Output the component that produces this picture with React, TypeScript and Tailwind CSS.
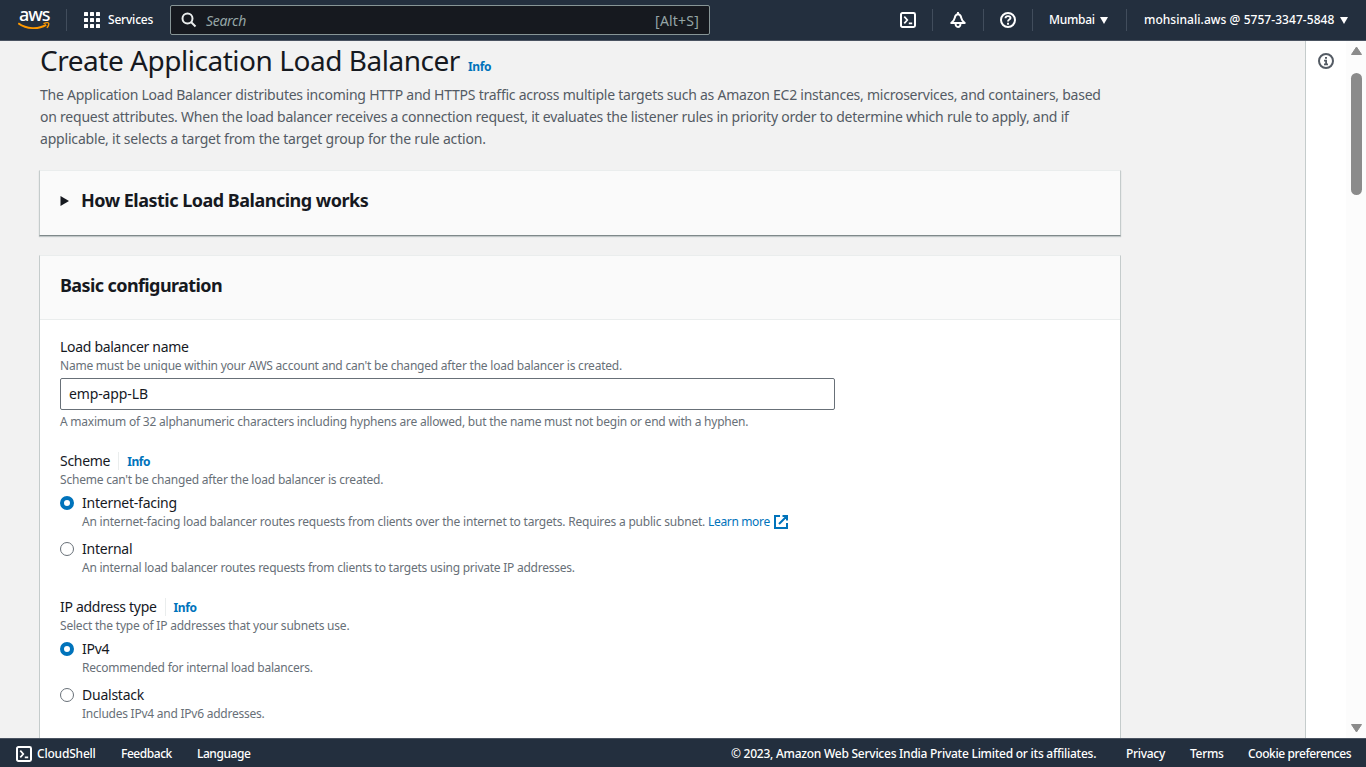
import type { ReactNode } from 'react';

function CloudShellIcon() {
  return (
    <svg width="16" height="16" viewBox="0 0 16 16" fill="none" stroke="currentColor" strokeWidth="2" className="shrink-0">
      <rect x="1" y="1" width="14" height="14" rx="1.4" />
      <path d="M4.300 4.600 7.300 8l-3 3.400M8.800 11.400h3.400" strokeWidth="1.700" />
    </svg>
  );
}

function BellIcon() {
  return (
    <svg width="16" height="16" viewBox="0 0 16 16" fill="none" stroke="currentColor" strokeWidth="1.9" strokeLinejoin="round">
      <path d="M8 0v2.200M1.200 11c2-1.400 3-2.400 3.500-5C5.100 3.700 6.200 2.200 8 2.200s2.900 1.500 3.300 3.800c.5 2.600 1.500 3.600 3.500 5zM5.500 11.500c0 2.200.9 3.500 2.500 3.500s2.500-1.300 2.500-3.500" />
    </svg>
  );
}

function HelpIcon() {
  return (
    <svg width="16" height="16" viewBox="0 0 16 16" fill="none" stroke="currentColor" strokeWidth="2">
      <circle cx="8" cy="8" r="7" />
      <path d="M5.500 6.300c0-1.500 1-2.200 2.500-2.200s2.500.8 2.500 2c0 1.500-2.500 1.500-2.500 3.400M8 10.800v1.900" strokeWidth="1.900" />
    </svg>
  );
}

function InfoIcon() {
  return (
    <svg width="16" height="16" viewBox="0 0 16 16" fill="none" stroke="#545b64" strokeWidth="2">
      <circle cx="8" cy="8" r="7" />
      <path d="M7 4.900h2M6 7.700h2.100v3.500M6 11.300h4" strokeWidth="1.800" />
    </svg>
  );
}

function AwsLogo() {
  return (
    <div className="relative h-[22px] w-8 text-white">
      <span className="absolute -top-[7px] left-[1px] text-[18px] leading-6 font-medium tracking-[-1px]">aws</span>
      <svg width="32" height="22" viewBox="0 0 32 22" fill="none" className="absolute inset-0">
        <path d="M0.300 14.200c8.300 6.200 20.200 6.300 27.900 1.700" stroke="#f90" strokeWidth="1.900" />
        <path d="M25.500 14.600c2.100-.9 4.700-1 5.100-.4.500.7-.1 3.300-1.800 4.600" stroke="#f90" strokeWidth="1.400" />
      </svg>
    </div>
  );
}

function Caret() {
  return (
    <svg width="8" height="7" viewBox="0 0 8 7" fill="currentColor">
      <path d="M0 0h8L4 7z" />
    </svg>
  );
}

function Divider() {
  return <div className="h-[22px] w-px bg-[#414d5c]" />;
}

function Header() {
  return (
    <header className="flex h-[41px] shrink-0 items-center border-b border-[#4a5361] bg-[#232f3e] text-[12px] text-white">
      <div className="ml-[18px] w-12"><AwsLogo /></div>
      <Divider />
      <div className="ml-[17px] grid grid-cols-3 gap-[2px]">
        {Array.from({ length: 9 }, (_, i) => <span key={i} className="size-1 rounded-[0.5px] bg-white" />)}
      </div>
      <span className="ml-2 w-[62px] font-medium tracking-[-0.2px] whitespace-nowrap">Services</span>
      <div className="flex h-[30px] w-[540px] items-center rounded-[2px] border border-[#879596] bg-[#16191f] px-[10px]">
        <svg width="16" height="16" viewBox="0 0 16 16" fill="none" stroke="#eaeded" strokeWidth="2">
          <circle cx="6.500" cy="6.500" r="5" /><path d="m10 10 4.500 4.500" />
        </svg>
        <span className="ml-[9px] flex-1 text-[14px] tracking-[-0.300px] text-[#95a5a6] italic">Search</span>
        <span className="text-[14px] tracking-[0.2px] text-[#95a5a6]">[Alt+S]</span>
      </div>
      <div className="ml-[190px] flex w-8"><CloudShellIcon /></div>
      <Divider />
      <div className="mx-[17px]"><BellIcon /></div>
      <Divider />
      <div className="ml-[16px] mr-4"><HelpIcon /></div>
      <Divider />
      <div className="ml-[16px] flex w-[77px] items-center gap-[5px] font-medium">
        <span className="w-[46px] tracking-[-0.300px] whitespace-nowrap">Mumbai</span><Caret />
      </div>
      <Divider />
      <div className="ml-[17px] flex items-center gap-[5px] font-medium">
        <span className="w-[191px] tracking-[0.050px] whitespace-nowrap">mohsinali.aws @ 5757-3347-5848</span><Caret />
      </div>
    </header>
  );
}

function Hint({ children, className = '' }: { children: ReactNode; className?: string }) {
  return <p className={`text-[12px] leading-[18px] whitespace-nowrap text-[#687078] ${className}`}>{children}</p>;
}

function FieldLabel({ children, info }: { children: string; info?: boolean }) {
  return (
    <div className="flex h-[22px] items-center text-[14px] leading-[22px] tracking-[-0.3px]">
      {children}
      {info && <span className="ml-2 flex h-[18px] items-center border-l border-[#eaeded] pt-px pl-2 text-[12px] font-bold tracking-[-0.4px] text-[#0073bb]">Info</span>}
    </div>
  );
}

function Option({ label, checked, children }: { label: string; checked?: boolean; children: ReactNode }) {
  return (
    <div className="flex h-[46px] gap-2">
      <span className={checked ? 'mt-1 size-[14px] shrink-0 rounded-full border-[4.500px] border-[#0073bb] bg-white' : 'mt-1 size-[14px] shrink-0 rounded-full border border-[#687078] bg-white'} />
      <div>
        <div className="text-[14px] leading-[22px] tracking-[-0.24px]">{label}</div>
        <Hint className="-mt-px tracking-[-0.24px]">{children}</Hint>
      </div>
    </div>
  );
}

function ExternalIcon() {
  return (
    <svg width="14" height="14" viewBox="0 0 14 14" fill="none" stroke="#0073bb" strokeWidth="2" className="ml-1 inline-block align-[-3px]">
      <path d="M6 1H1v12h12V8M8.500 1H13v4.500M13 1 5 9" />
    </svg>
  );
}

export default function App() {
  return (
    <div className="flex h-[767px] w-[1366px] flex-col overflow-hidden bg-[#f2f2f2] font-['Noto_Sans','Open_Sans',sans-serif] text-[#16191f]">
      <Header />
      <div className="flex min-h-0 flex-1">
        <main className="min-w-0 flex-1 overflow-hidden pt-px pl-[39px]">
          <div className="w-[1082px]">
            <div className="flex h-9 items-baseline pl-px">
              <h1 className="text-[28px] leading-9 tracking-[-0.47px] whitespace-nowrap">Create Application Load Balancer</h1>
              <span className="ml-2 text-[12px] font-bold tracking-[-0.3px] text-[#0073bb]">Info</span>
            </div>
            <p className="mt-[6px] pl-px text-[14px] leading-[22px] tracking-[-0.240px] whitespace-nowrap text-[#545b64]">
              The Application Load Balancer distributes incoming HTTP and HTTPS traffic across multiple targets such as Amazon EC2 instances, microservices, and containers, based<br />
              <span className="tracking-[-0.232px]">on request attributes. When the load balancer receives a connection request, it evaluates the listener rules in priority order to determine which rule to apply, and if</span><br />
              <span className="tracking-[-0.190px]">applicable, it selects a target from the target group for the rule action.</span>
            </p>
            <section className="mt-5 flex h-[66px] items-center border-x border-t border-b border-x-[#c5cccc] border-t-[#eaeded] border-b-[#7f898a] bg-[#fafafa] pl-5 pb-[5px] shadow-[0_1px_1px_rgba(0,28,36,0.2)]">
              <svg width="9" height="10" viewBox="0 0 9 10"><path d="M0.500 0 9 5 0.500 10z" fill="#16191f" /></svg>
              <h2 className="ml-3 pb-[2px] text-[18px] leading-[22px] font-bold tracking-[-0.5px] whitespace-nowrap">How Elastic Load Balancing works</h2>
            </section>
            <section className="mt-[19px] h-[600px] border-x border-t border-x-[#c5cccc] border-t-[#eaeded] bg-white">
              <div className="flex h-16 items-center border-b border-[#eaeded] bg-[#fafafa] pb-1.5 pl-5">
                <h2 className="text-[18px] leading-[22px] font-bold tracking-[-0.6px]">Basic configuration</h2>
              </div>
              <div className="pt-4 pl-5">
                <FieldLabel>Load balancer name</FieldLabel>
                <Hint className="-mt-px tracking-[-0.22px]">Name must be unique within your AWS account and can't be changed after the load balancer is created.</Hint>
                <div className="mt-[3px] flex h-8 w-[775px] items-center rounded-[2px] border border-[#687078] px-2 pb-px text-[14px] tracking-[-0.12px]">emp-app-LB</div>
                <Hint className="mt-[3px] tracking-[-0.22px]">A maximum of 32 alphanumeric characters including hyphens are allowed, but the name must not begin or end with a hyphen.</Hint>
                <div className="mt-[19px]">
                  <FieldLabel info>Scheme</FieldLabel>
                  <Hint className="mb-[3px] -mt-px tracking-[-0.21px]">Scheme can't be changed after the load balancer is created.</Hint>
                  <Option label="Internet-facing" checked>
                    <span className="tracking-[-0.198px]">An internet-facing load balancer routes requests from clients over the internet to targets. Requires a public subnet. </span><span className="tracking-[-0.35px] text-[#0073bb]">Learn more</span><ExternalIcon />
                  </Option>
                  <Option label="Internal">An internal load balancer routes requests from clients to targets using private IP addresses.</Option>
                </div>
                <div className="mt-3">
                  <FieldLabel info>IP address type</FieldLabel>
                  <Hint className="mb-[3px] -mt-px tracking-[-0.21px]">Select the type of IP addresses that your subnets use.</Hint>
                  <Option label="IPv4" checked>Recommended for internal load balancers.</Option>
                  <Option label="Dualstack">Includes IPv4 and IPv6 addresses.</Option>
                </div>
              </div>
            </section>
          </div>
        </main>
        <aside className="flex w-[41px] justify-center border-l border-[#c5cccc] bg-white pt-3"><InfoIcon /></aside>
        <div className="flex w-5 flex-col items-center bg-[#fcfcfc] pt-[5px] pb-[5px]">
          <svg width="11" height="9" viewBox="0 0 11 9"><path d="M5.500 1 10.500 8.500H.5z" fill="#8b8b8b" stroke="#8b8b8b" strokeLinejoin="round" /></svg>
          <div className="mt-[18px] h-[122px] w-[11px] rounded-full bg-[#8b8b8b]" />
          <svg className="mt-auto" width="11" height="9" viewBox="0 0 11 9"><path d="M5.500 8 10.500.5H.5z" fill="#8b8b8b" stroke="#8b8b8b" strokeLinejoin="round" /></svg>
        </div>
      </div>
      <footer className="flex h-[29px] shrink-0 items-center border-t border-[#4a5361] bg-[#232f3e] pt-[2px] pl-4 text-[12px] font-medium tracking-[-0.3px] whitespace-nowrap text-white">
        <CloudShellIcon />
        <span className="ml-[5px] w-[84px] tracking-[-0.2px]">CloudShell</span>
        <span className="w-[76px] tracking-[-0.450px]">Feedback</span>
        <span className="w-[534px] tracking-[-0.450px]">Language</span>
        <span className="w-[395px] tracking-[-0.25px]">© 2023, Amazon Web Services India Private Limited or its affiliates.</span>
        <span className="w-16">Privacy</span>
        <span className="w-[58px]">Terms</span>
        <span className="tracking-[-0.4px]">Cookie preferences</span>
      </footer>
    </div>
  );
}
